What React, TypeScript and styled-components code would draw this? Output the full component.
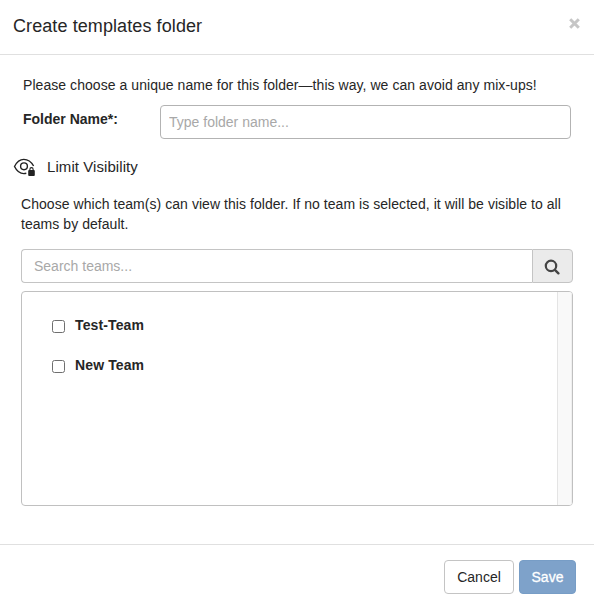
import React, { useState } from "react";
import styled, { createGlobalStyle } from "styled-components";

const GlobalStyle = createGlobalStyle`
  *, *::before, *::after { box-sizing: border-box; }
  body {
    margin: 0;
    background: #fff;
    color: #262626;
    font: 14px/20px "Liberation Sans", Arial, sans-serif;
  }
  input, button { font: inherit; color: inherit; }
`;

const Dialog = styled.form`
  display: flex;
  flex-direction: column;
  height: 606px;
`;

const Header = styled.header`
  display: flex;
  justify-content: space-between;
  height: 55px;
  padding: 14px 13px 0;
  border-bottom: 1px solid #e0e0e0;
`;

const Title = styled.h1`
  margin: 0;
  font-size: 18px;
  font-weight: 400;
  line-height: 24px;
  letter-spacing: 0.09px;
`;

const CloseButton = styled.button`
  width: 13px;
  height: 13px;
  margin: 3px 0 0;
  padding: 0;
  border: 0;
  background: none;
  svg { display: block; }
`;

const Body = styled.main`
  flex: 1;
  padding: 20px 21px 0;
`;

const Intro = styled.p`
  margin: 0 0 10px 2px;
  letter-spacing: 0.055px;
`;

const Field = styled.div`
  display: flex;
  align-items: flex-start;
  padding: 0 2px;
`;

const FieldLabel = styled.label`
  width: 137px;
  padding-top: 4px;
  font-weight: 700;
`;

const TextInput = styled.input<{ $joined?: boolean }>`
  flex: 1;
  min-width: 0;
  height: 34px;
  padding: 0 ${(p) => (p.$joined ? 12 : 8)}px;
  border: 1px solid ${(p) => (p.$joined ? "#c4c4c4" : "#b3b3b3")};
  border-right-width: ${(p) => (p.$joined ? 0 : 1)}px;
  border-radius: ${(p) => (p.$joined ? "4px 0 0 4px" : "4px")};
  background: #fff;
  outline: 0;
  &::placeholder { color: #a8a8a8; opacity: 1; }
`;

const VisibilityHeading = styled.h2`
  display: flex;
  align-items: center;
  gap: 11px;
  margin: 18px 0 17px -8px;
  font-size: 15px;
  font-weight: 400;
  line-height: 20px;
  letter-spacing: 0.07px;
`;

const Help = styled.p`
  margin: 0 0 15px;
  letter-spacing: 0.05px;
`;

const SearchGroup = styled.div`
  display: flex;
`;

const SearchButton = styled.button`
  display: flex;
  align-items: center;
  justify-content: center;
  width: 41px;
  height: 34px;
  padding: 1px 2px 0 0;
  border: 1px solid #c4c4c4;
  border-radius: 0 4px 4px 0;
  background: #ebebeb;
`;

const TeamPanel = styled.div`
  display: flex;
  justify-content: space-between;
  height: 215px;
  margin-top: 8px;
  border: 1px solid #c0c0c0;
  border-radius: 4px;
  overflow: hidden;
`;

const TeamList = styled.ul`
  margin: 0;
  padding: 23px 30px;
  list-style: none;
`;

const TeamRow = styled.li`
  height: 40px;
`;

const TeamLabel = styled.label`
  display: flex;
  gap: 10px;
  font-weight: 700;
  letter-spacing: 0.12px;
`;

const Checkbox = styled.input`
  appearance: none;
  width: 13px;
  height: 13px;
  margin: 5px 0 0;
  border: 1px solid #6f6f6f;
  border-radius: 2.5px;
  background: #fff;
  &:checked { background: #7ba1c9; }
`;

const ScrollTrack = styled.div`
  width: 15px;
  border-left: 1px solid #e4e4e4;
  border-right: 1px solid #efefef;
  background: #f9f9f9;
`;

const Footer = styled.footer`
  display: flex;
  justify-content: flex-end;
  gap: 5px;
  height: 62px;
  padding: 15px 18px 0 0;
  border-top: 1px solid #e0e0e0;
`;

const Button = styled.button<{ $primary?: boolean }>`
  width: ${(p) => (p.$primary ? 57 : 70)}px;
  height: 34px;
  padding: 0;
  border: 1px solid ${(p) => (p.$primary ? "#779dc6" : "#c4c4c4")};
  border-radius: 4px;
  background: ${(p) => (p.$primary ? "#7ea2ca" : "#fff")};
  color: ${(p) => (p.$primary ? "#fff" : "#262626")};
  -webkit-text-stroke: ${(p) => (p.$primary ? "0.3px #fff" : "0")};
`;

const CloseIcon = () => (
  <svg width="13" height="13" viewBox="0 0 13 13" fill="none" stroke="#c6c6c6" strokeWidth="3">
    <path d="M2.2 2.2l8.6 8.600M10.800 2.200l-8.600 8.600" />
  </svg>
);

const EyeLockIcon = () => (
  <svg width="23" height="20" viewBox="0 0 23 20" fill="none" stroke="#222" strokeWidth="1.400">
    <path d="M13.300 16.300c-.8.200-1.600.300-2.500.300C6.800 16.600 3.500 13.500 1.500 9.500 3.500 5.500 6.800 2.400 10.800 2.400s7.400 2.400 9.800 6.600" />
    <circle cx="11" cy="9.300" r="3.400" />
    <path d="M16.900 13.500v-1.300a1.600 1.600 0 0 1 3.200 0v1.300" strokeWidth="1.100" />
    <rect x="15.200" y="13" width="6.600" height="6" rx=".9" fill="#222" stroke="none" />
  </svg>
);

const SearchIcon = () => (
  <svg width="16" height="16" viewBox="0 0 16 16" fill="none" stroke="#444" strokeWidth="2.200">
    <circle cx="7" cy="6.900" r="5.200" />
    <path d="M10.900 10.800l3.500 3.500" strokeWidth="2.400" strokeLinecap="round" />
  </svg>
);

const teams = ["Test-Team", "New Team"];

export default function App() {
  const [selected, setSelected] = useState<string[]>([]);
  const toggle = (team: string) =>
    setSelected((prev) => (prev.includes(team) ? prev.filter((t) => t !== team) : [...prev, team]));

  return (
    <>
      <GlobalStyle />
      <Dialog onSubmit={(e) => e.preventDefault()}>
        <Header>
          <Title>Create templates folder</Title>
          <CloseButton type="button" aria-label="Close"><CloseIcon /></CloseButton>
        </Header>
        <Body>
          <Intro>Please choose a unique name for this folder—this way, we can avoid any mix-ups!</Intro>
          <Field>
            <FieldLabel htmlFor="folder-name">Folder Name*:</FieldLabel>
            <TextInput id="folder-name" placeholder="Type folder name..." />
          </Field>
          <VisibilityHeading><EyeLockIcon /><span>Limit Visibility</span></VisibilityHeading>
          <Help>
            Choose which team(s) can view this folder. If no team is selected, it will be visible to all teams by default.
          </Help>
          <SearchGroup>
            <TextInput $joined placeholder="Search teams..." aria-label="Search teams" />
            <SearchButton type="button" aria-label="Search"><SearchIcon /></SearchButton>
          </SearchGroup>
          <TeamPanel>
            <TeamList>
              {teams.map((team) => (
                <TeamRow key={team}>
                  <TeamLabel>
                    <Checkbox type="checkbox" checked={selected.includes(team)} onChange={() => toggle(team)} />
                    {team}
                  </TeamLabel>
                </TeamRow>
              ))}
            </TeamList>
            <ScrollTrack />
          </TeamPanel>
        </Body>
        <Footer>
          <Button type="button">Cancel</Button>
          <Button type="submit" $primary>Save</Button>
        </Footer>
      </Dialog>
    </>
  );
}
